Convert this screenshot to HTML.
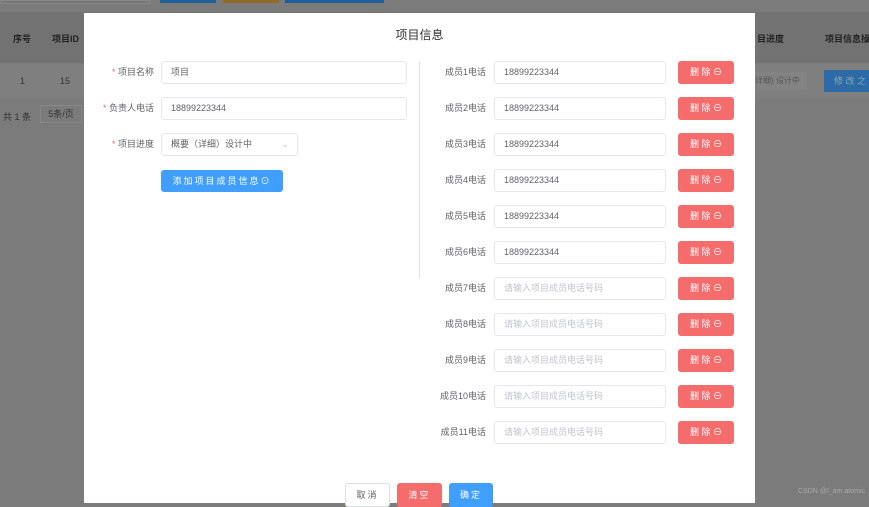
<!DOCTYPE html><html><head><meta charset="utf-8"><style>
*{box-sizing:border-box;margin:0;padding:0}
body{width:869px;height:500px;overflow:hidden;background:#7b7b7b;font-family:"Liberation Sans","Noto Sans CJK SC",sans-serif;font-size:9px;color:#606266;position:relative;white-space:nowrap}
.a{position:absolute}
.inp{position:absolute;height:23px;border:1px solid #e4e7ed;border-radius:3px;background:#fff;padding-left:9px;line-height:21px;font-size:9px;color:#606266}
.ph{color:#c0c4cc}
.lab{position:absolute;text-align:right;line-height:23px;font-size:9px;color:#606266}
.st{color:#f56c6c}
.del{position:absolute;left:678px;width:56px;height:23px;background:#f56c6c;border-radius:3px;color:#fff;text-align:center;line-height:23px;font-size:9px}
</style></head><body>
<div class="a" style="left:0;top:0;width:150px;height:4px;background:#777;border:1px solid #888"></div>
<div class="a" style="left:160px;top:0;width:56px;height:3px;background:#1f5e99"></div>
<div class="a" style="left:223px;top:0;width:56px;height:3px;background:#8f6a2a"></div>
<div class="a" style="left:285px;top:0;width:99px;height:3px;background:#1f5e99"></div>
<div class="a" style="left:0;top:12px;width:869px;height:51px;background:#727272"></div>
<div class="a" style="left:0;top:64px;width:869px;height:34px;background:#7f7f7f"></div>
<div class="a" style="left:13px;top:32px;font-weight:bold;color:#222">序号</div>
<div class="a" style="left:52px;top:32px;font-weight:bold;color:#222">项目ID</div>
<div class="a" style="left:20px;top:76px;color:#333">1</div>
<div class="a" style="left:60px;top:76px;color:#333">15</div>
<div class="a" style="left:3px;top:110px;color:#333">共 1 条</div>
<div class="a" style="left:40px;top:105px;width:42px;height:18px;border:1px solid #888;line-height:16px;text-align:center;color:#333">5条/页</div>
<div class="a" style="left:757px;top:32px;font-weight:bold;color:#222">目进度</div>
<div class="a" style="left:825px;top:32px;font-weight:bold;color:#222">项目信息操</div>
<div class="a" style="left:755px;top:72px;width:52px;height:18px;background:#838383;line-height:18px;color:#555;font-size:8px">详细) 设计中</div>
<div class="a" style="left:824px;top:70px;width:50px;height:22px;background:#2c6aa8;color:#8aa;line-height:22px;padding-left:10px">修 改 之</div>
<div class="a" style="right:4px;top:488px;color:#aaa;font-size:7px">CSDN @I_am atomic</div>

<div class="a" style="left:84px;top:13px;width:671px;height:490px;background:#fff">
<div class="a" style="left:0;top:13px;width:671px;text-align:center;font-size:12px;color:#303133">项目信息</div>
</div>
<div class="lab" style="left:90px;top:61px;width:64px"><span class="st">*</span> 项目名称</div>
<div class="inp" style="left:161px;top:61px;width:246px">项目</div>
<div class="lab" style="left:90px;top:97px;width:64px"><span class="st">*</span> 负责人电话</div>
<div class="inp" style="left:161px;top:97px;width:246px">18899223344</div>
<div class="lab" style="left:90px;top:133px;width:64px"><span class="st">*</span> 项目进度</div>
<div class="inp" style="left:161px;top:133px;width:137px">概要（详细）设计中<span style="position:absolute;right:8px;color:#c0c4cc">⌄</span></div>
<div class="a" style="left:161px;top:170px;width:122px;height:22px;background:#409eff;border-radius:3px;color:#fff;text-align:center;line-height:22px;letter-spacing:2px">添加项目成员信息⊙</div>
<div class="a" style="left:419px;top:62px;width:1px;height:216px;background:#dcdfe6"></div>

<div class="lab" style="left:420px;top:61px;width:66px">成员1电话</div><div class="inp" style="left:494px;top:61px;width:172px">18899223344</div><div class="del" style="top:61px">删 除 ⊖</div>
<div class="lab" style="left:420px;top:97px;width:66px">成员2电话</div><div class="inp" style="left:494px;top:97px;width:172px">18899223344</div><div class="del" style="top:97px">删 除 ⊖</div>
<div class="lab" style="left:420px;top:133px;width:66px">成员3电话</div><div class="inp" style="left:494px;top:133px;width:172px">18899223344</div><div class="del" style="top:133px">删 除 ⊖</div>
<div class="lab" style="left:420px;top:169px;width:66px">成员4电话</div><div class="inp" style="left:494px;top:169px;width:172px">18899223344</div><div class="del" style="top:169px">删 除 ⊖</div>
<div class="lab" style="left:420px;top:205px;width:66px">成员5电话</div><div class="inp" style="left:494px;top:205px;width:172px">18899223344</div><div class="del" style="top:205px">删 除 ⊖</div>
<div class="lab" style="left:420px;top:241px;width:66px">成员6电话</div><div class="inp" style="left:494px;top:241px;width:172px">18899223344</div><div class="del" style="top:241px">删 除 ⊖</div>
<div class="lab" style="left:420px;top:277px;width:66px">成员7电话</div><div class="inp ph" style="left:494px;top:277px;width:172px">请输入项目成员电话号码</div><div class="del" style="top:277px">删 除 ⊖</div>
<div class="lab" style="left:420px;top:313px;width:66px">成员8电话</div><div class="inp ph" style="left:494px;top:313px;width:172px">请输入项目成员电话号码</div><div class="del" style="top:313px">删 除 ⊖</div>
<div class="lab" style="left:420px;top:349px;width:66px">成员9电话</div><div class="inp ph" style="left:494px;top:349px;width:172px">请输入项目成员电话号码</div><div class="del" style="top:349px">删 除 ⊖</div>
<div class="lab" style="left:420px;top:385px;width:66px">成员10电话</div><div class="inp ph" style="left:494px;top:385px;width:172px">请输入项目成员电话号码</div><div class="del" style="top:385px">删 除 ⊖</div>
<div class="lab" style="left:420px;top:421px;width:66px">成员11电话</div><div class="inp ph" style="left:494px;top:421px;width:172px">请输入项目成员电话号码</div><div class="del" style="top:421px">删 除 ⊖</div>

<div class="a" style="left:345px;top:483px;width:45px;height:24px;border:1px solid #dcdfe6;border-radius:3px;text-align:center;line-height:22px;background:#fff;letter-spacing:2px">取消</div>
<div class="a" style="left:397px;top:483px;width:45px;height:24px;background:#f56c6c;border-radius:3px;color:#fff;text-align:center;line-height:24px;letter-spacing:2px">清空</div>
<div class="a" style="left:449px;top:483px;width:44px;height:24px;background:#409eff;border-radius:3px;color:#fff;text-align:center;line-height:24px;letter-spacing:2px">确定</div>
</body></html>
